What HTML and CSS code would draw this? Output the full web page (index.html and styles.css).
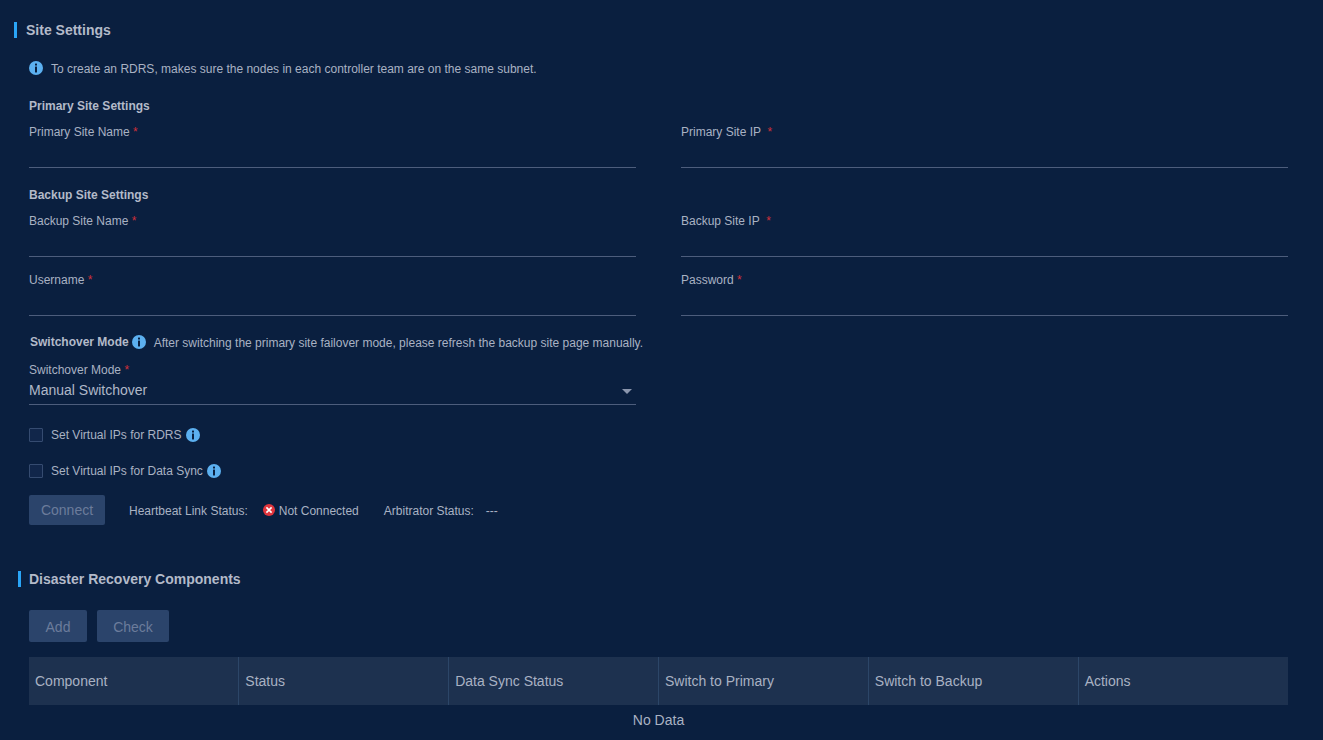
FILE: index.html
```html
<!DOCTYPE html>
<html lang="en">
<head>
<meta charset="utf-8">
<title>Site Settings</title>
<link rel="stylesheet" href="styles.css">
</head>
<body>
<svg class="sprite" aria-hidden="true"><symbol id="info" viewBox="0 0 14 14"><circle cx="7" cy="7" r="7" fill="#5cb0f0"/><rect x="6" y="2.6" width="2" height="2" rx=".4" fill="#0a1f3f"/><rect x="6" y="5.6" width="2" height="5.8" rx=".3" fill="#0a1f3f"/></symbol></svg>
<main class="page">
  <section class="site">
    <h2 class="heading"><span class="bar"></span>Site Settings</h2>
    <div class="body">
      <p class="tip"><svg class="icon"><use href="#info"/></svg><span>To create an RDRS, makes sure the nodes in each controller team are on the same subnet.</span></p>
      <h3 class="sub first">Primary Site Settings</h3>
      <div class="grid">
        <div class="field"><label>Primary Site Name <i>*</i></label></div>
        <div class="field"><label>Primary Site IP &nbsp;<i>*</i></label></div>
      </div>
      <h3 class="sub">Backup Site Settings</h3>
      <div class="grid">
        <div class="field"><label>Backup Site Name <i>*</i></label></div>
        <div class="field"><label>Backup Site IP &nbsp;<i>*</i></label></div>
        <div class="field"><label>Username <i>*</i></label></div>
        <div class="field"><label>Password <i>*</i></label></div>
      </div>
      <div class="mode-head"><h3 class="sub inline">Switchover Mode</h3><svg class="icon"><use href="#info"/></svg><span>After switching the primary site failover mode, please refresh the backup site page manually.</span></div>
      <div class="grid select-grid">
        <div class="field select"><label>Switchover Mode <i>*</i></label><div class="value">Manual Switchover<span class="caret"></span></div></div>
      </div>
      <div class="check first-check"><span class="box"></span>Set Virtual IPs for RDRS<svg class="icon"><use href="#info"/></svg></div>
      <div class="check second-check"><span class="box"></span>Set Virtual IPs for Data Sync<svg class="icon"><use href="#info"/></svg></div>
      <div class="connect">
        <button class="btn wide" type="button" disabled>Connect</button>
        <span class="hb">Heartbeat Link Status:</span>
        <svg class="err" viewBox="0 0 12 12"><circle cx="6" cy="6" r="6" fill="#e0343c"/><path d="M3.4 3.4l5.2 5.2M8.6 3.4L3.4 8.6" stroke="#fff" stroke-width="1.6"/></svg>
        <span class="nc">Not Connected</span>
        <span class="arb">Arbitrator Status:</span>
        <span class="dash">---</span>
      </div>
    </div>
  </section>
  <section class="dr">
    <h2 class="heading dr-heading"><span class="bar"></span>Disaster Recovery Components</h2>
    <div class="dr-body">
      <div class="actions">
        <button class="btn add" type="button" disabled>Add</button>
        <button class="btn check-btn" type="button" disabled>Check</button>
      </div>
      <table class="table">
        <thead><tr><th>Component</th><th>Status</th><th>Data Sync Status</th><th>Switch to Primary</th><th>Switch to Backup</th><th>Actions</th></tr></thead>
        <tbody><tr><td colspan="6">No Data</td></tr></tbody>
      </table>
    </div>
  </section>
</main>
</body>
</html>
```
FILE: styles.css
```css
* { box-sizing: border-box; }
html, body { margin: 0; height: 100%; overflow: hidden; }
body {
  background: #0a1f3f;
  color: #a9b2c3;
  font: 12px/16px "Liberation Sans", Arial, sans-serif;
}
.sprite { display: none; }
.page { padding: 22px 35px 0 14px; }
.heading {
  display: flex; align-items: center; gap: 9px; margin: 0;
  height: 16px; font-size: 14px; font-weight: 700; color: #b3bac9;
}
.bar { width: 3px; height: 16px; background: #2aa5f7; }
.body { padding-left: 15px; }
.tip { display: flex; align-items: center; gap: 8px; margin: 22px 0 0; height: 16px; }
.tip span, .mode-head span, .connect span { padding-top: 2px; }
.icon { width: 14px; height: 14px; flex: none; }
.sub { margin: 19px 0 0; height: 16px; font-size: 12px; font-weight: 700; color: #b3bac9; }
.sub.first { margin-top: 22px; }
.sub.inline { margin: 0 0 0 1px; }
.grid { display: grid; grid-template-columns: 607px 607px; column-gap: 45px; row-gap: 15px; margin-top: 10px; }
.field { height: 44px; border-bottom: 1px solid #4d5d7c; }
.field label { display: block; height: 16px; }
.field i { color: #d0303a; font-style: normal; }
.mode-head { display: flex; align-items: center; margin-top: 18px; height: 16px; }
.mode-head .icon { margin: 0 8px 0 3px; }
.select-grid { margin-top: 12px; }
.select { height: 43px; }
.value { position: relative; font-size: 14px; line-height: 20px; margin-top: 2px; color: #b0b8c8; }
.caret {
  position: absolute; right: 4px; top: 9px;
  border: 5px solid transparent; border-top: 5px solid #8b96ad; border-bottom: 0;
}
.check { display: flex; align-items: center; height: 14px; }
.check .icon { margin-left: 4px; }
.first-check { margin-top: 23px; }
.second-check { margin-top: 22px; }
.box { width: 14px; height: 14px; margin-right: 8px; border: 1px solid #354b70; border-radius: 1px; background: #11264a; }
.connect { display: flex; align-items: center; margin-top: 17px; height: 30px; }
.btn {
  height: 32px; border: 0; border-radius: 2px; background: #2b446b; color: #6c7c9b;
  font: 14px "Liberation Sans", Arial, sans-serif; padding: 1px 0 0;
}
.wide { width: 76px; height: 30px; padding: 0; }
.hb { margin-left: 24px; }
.err { width: 12px; height: 12px; margin-left: 15px; }
.nc { margin-left: 4px; }
.arb { margin-left: 25px; }
.dash { margin-left: 12px; }
.dr { padding: 46px 0 0 4px; }
.dr-heading { gap: 8px; }
.dr-body { padding-left: 11px; }
.actions { display: flex; gap: 10px; margin-top: 23px; }
.add { width: 58px; }
.check-btn { width: 72px; }
.table { width: 1259px; margin-top: 15px; border-collapse: collapse; table-layout: fixed; font-size: 14px; }
.table th {
  height: 48px; padding: 0 6px; background: #1d314f; font-weight: 400; text-align: left;
  border-left: 1px solid #2c4668;
}
.table th:first-child { border-left: 0; }
.table td { height: 30px; padding: 0; text-align: center; }
```
